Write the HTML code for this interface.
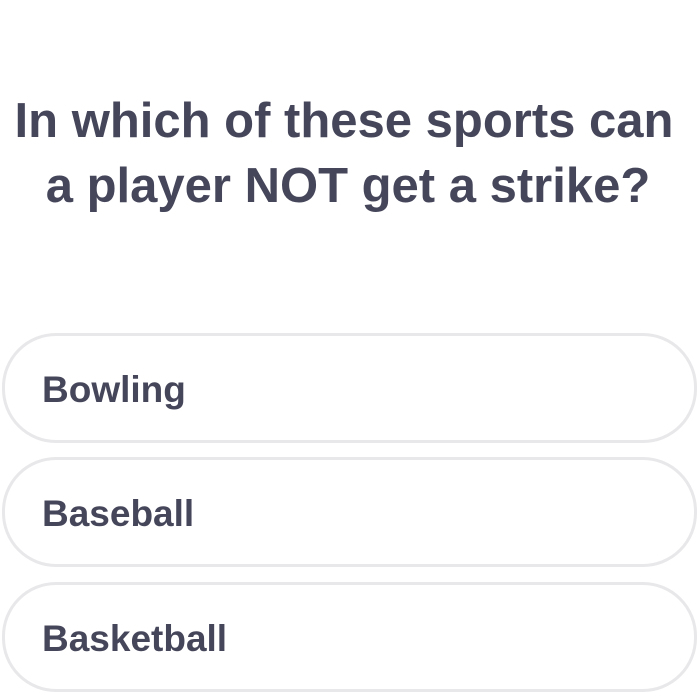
<!DOCTYPE html>
<html><head><meta charset="utf-8"><style>
html,body{margin:0;padding:0;background:#fff;width:700px;height:700px;overflow:hidden}
body{font-family:"Liberation Sans",sans-serif;color:#45465a;position:relative}
.t{position:absolute;left:0;width:700px;text-align:center;font-weight:bold;font-size:49px;line-height:1;white-space:nowrap}
.b{position:absolute;left:2px;width:689px;height:104px;border:3px solid #e8e8ea;border-radius:54px;box-sizing:content-box}
.b span{position:absolute;left:37px;top:50%;transform:translateY(-50%);font-weight:bold;font-size:37px;margin-top:2px}
</style></head><body>
<div class="t" style="top:97px;left:-6px">In which of these sports can</div>
<div class="t" style="top:162px;left:-2px">a player NOT get a strike?</div>
<div class="b" style="top:333px"><span>Bowling</span></div>
<div class="b" style="top:457px"><span>Baseball</span></div>
<div class="b" style="top:582px"><span>Basketball</span></div>
</body></html>
